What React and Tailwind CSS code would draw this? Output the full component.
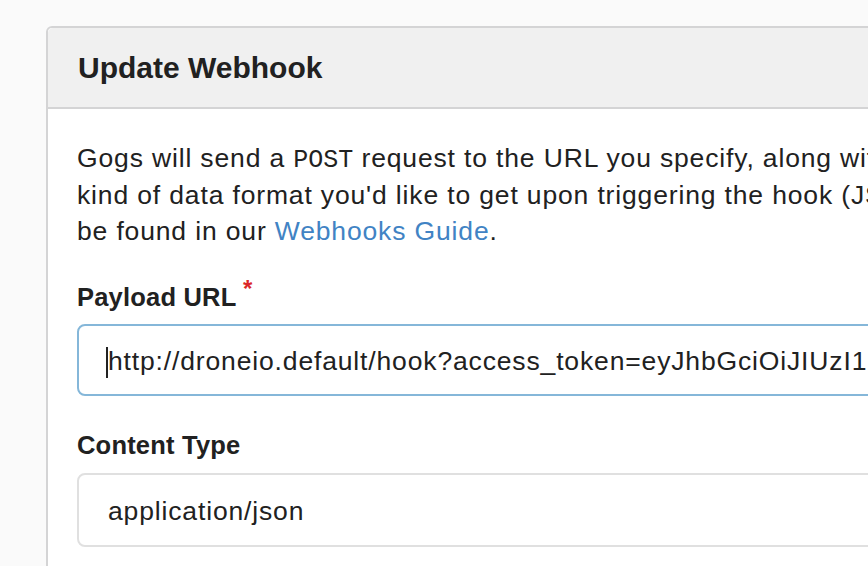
const App = () => {
  return (
    <div className="min-h-[566px] w-[868px] overflow-hidden bg-[#fafafa] pl-[46px] pt-[26px] font-['Liberation_Sans',Arial,sans-serif] text-[#212121]">
      <div className="w-[1100px] rounded-[6px] border-2 border-[#d4d4d5] bg-white">
        <div className="rounded-t-[5px] border-b-2 border-[#d4d4d5] bg-[#f0f0f0] py-[22px] pl-[30px]">
          <h2 className="text-[30px] font-bold leading-[35px]">Update Webhook</h2>
        </div>

        <div className="pl-[29px] pr-[30px] pt-[31px] pb-10">
          <div className="whitespace-nowrap text-[26.5px] leading-[36.5px] tracking-[0.85px]">
            <div>
              Gogs will send a{" "}
              <code className="font-['Liberation_Mono',monospace] text-[25px] leading-none tracking-normal">POST</code>{" "}
              request to the URL you specify, along with details regarding the event that occurred. You can also specify what
            </div>
            <div>
              kind of data format you'd like to get upon triggering the hook (JSON, x-www-form-urlencoded, XML, etc). More information can
            </div>
            <div>
              be found in our <span className="text-[#4183c4]">Webhooks Guide</span>.
            </div>
          </div>

          <div className="mt-[32px]">
            <label className="relative inline-block text-[25.5px] font-bold leading-[30px] tracking-[0.2px]">
              Payload URL
              <span className="absolute -top-[8px] -right-[16px] text-[24px] font-bold text-[#db2828]">*</span>
            </label>
            <div className="mt-[11px] flex h-[72px] items-center overflow-hidden rounded-[8px] border-2 border-[#85b7d9] pl-[27px] pt-[5px]">
              <span className="h-[31px] w-[2px] shrink-0 bg-[#222]" />
              <span className="shrink-0 whitespace-nowrap text-[26.5px] tracking-[0.85px]">
                http://droneio.default/hook?access_token=eyJhbGciOiJIUzI1NiIsInR5cCI6IkpXVCJ9
              </span>
            </div>
          </div>

          <div className="mt-[34px]">
            <label className="block text-[25.5px] font-bold leading-[30px] tracking-[0.2px]">Content Type</label>
            <div className="mt-[13px] flex h-[74px] items-center rounded-[8px] border-2 border-[#e0e0e0] pl-[29px] pt-[5px]">
              <span className="whitespace-nowrap text-[26.5px] tracking-[0.85px]">application/json</span>
            </div>
          </div>
        </div>
      </div>
    </div>
  );
};

export default App;
